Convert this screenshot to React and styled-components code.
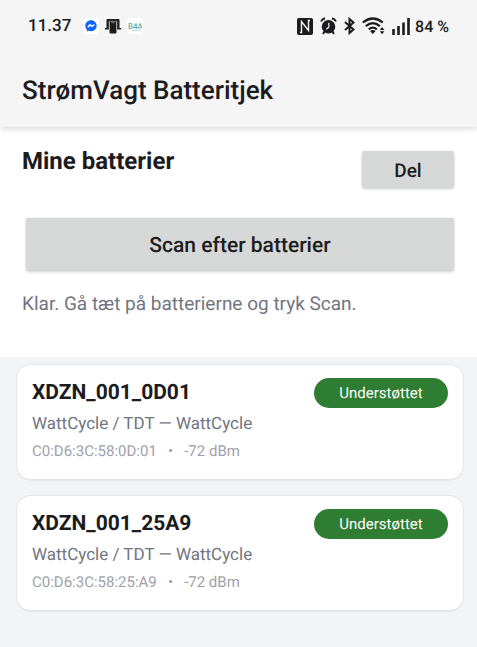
import React from "react";
import styled, { createGlobalStyle } from "styled-components";

const ink = "#1c1c1e";

const GlobalStyle = createGlobalStyle`
  * {
    box-sizing: border-box;
  }

  body {
    margin: 0;
    background: #f3f4f8;
    color: ${ink};
    font-family: Roboto, "Liberation Sans", sans-serif;
    text-rendering: geometricPrecision;
  }

  h1, h2, h3, p, ul {
    margin: 0;
    padding: 0;
  }
`;

const Header = styled.header`
  position: relative;
  background: #f5f5f5;
  box-shadow: 0 1px 6px rgba(0, 0, 0, 0.2);
`;

const StatusBar = styled.div`
  display: flex;
  justify-content: space-between;
  align-items: center;
  height: 52px;
  padding: 0 28px;
`;

const StatusGroup = styled.div`
  display: flex;
  align-items: center;
  gap: ${({ $gap }) => $gap}px;
`;

const Clock = styled.span`
  margin-right: 6px;
  font-size: 17px;
  font-weight: 500;
`;

const Charge = styled.span`
  margin-left: -2px;
  font-size: 16px;
  font-weight: 500;
`;

const AppBadge = styled.span`
  display: flex;
  align-items: center;
  justify-content: center;
  width: 16px;
  height: 16px;
  border-radius: 4px;
  background: white;
`;

const Title = styled.h1`
  padding: 20px 22px 17px;
  font-size: 26px;
  font-weight: 500;
  line-height: 38px;
`;

const Panel = styled.section`
  padding: 20px 22px 41px;
  background: white;
`;

const PanelTop = styled.div`
  display: flex;
  justify-content: space-between;
  align-items: flex-start;
`;

const Heading = styled.h2`
  font-size: 24px;
  font-weight: 700;
  line-height: 28px;
`;

const Button = styled.button`
  display: block;
  width: ${({ $wide }) => ($wide ? "calc(100% - 5px)" : "92px")};
  height: ${({ $wide }) => ($wide ? 53 : 37)}px;
  margin: ${({ $wide }) => ($wide ? "30px 1px 0 4px" : "4px 1px 0 0")};
  padding: 2px 0 0;
  border: none;
  border-radius: 2px;
  background: #d6d8d7;
  box-shadow: 0 1px 3px rgba(0, 0, 0, 0.2);
  color: ${ink};
  font-family: inherit;
  font-size: ${({ $wide }) => ($wide ? 21 : 19)}px;
  font-weight: 500;
  text-rendering: inherit;
`;

const Hint = styled.p`
  margin-top: 21px;
  color: #72757f;
  font-size: 19px;
  line-height: 24px;
`;

const List = styled.ul`
  display: flex;
  flex-direction: column;
  gap: 14px;
  padding: 7px 13px 24px 16px;
  list-style: none;
`;

const Card = styled.li`
  display: flex;
  justify-content: space-between;
  align-items: flex-start;
  padding: 13px 15px 17px;
  border: 1px solid #e4e5e9;
  border-bottom-width: 2px;
  border-radius: 15px;
  background: white;
`;

const Name = styled.h3`
  font-size: 21px;
  font-weight: 700;
  line-height: 30px;
`;

const Model = styled.p`
  color: #72757f;
  font-size: 17px;
  line-height: 32px;
`;

const Meta = styled.p`
  color: #9ea1aa;
  font-size: 15px;
  line-height: 22px;
  white-space: pre;
`;

const Tag = styled.span`
  width: 134px;
  border-radius: 15px;
  background: #2f7d32;
  color: white;
  font-size: 15px;
  line-height: 30px;
  text-align: center;
`;

const Messenger = () => (
  <svg width="12" height="12" viewBox="0 0 12 12">
    <path
      d="M6 .3C2.7.3.3 2.7.3 5.8c0 1.7.6 3.1 1.7 4.1l.1 1.6 1.7-.7c.7.2 1.4.4 2.2.4 3.3 0 5.7-2.4 5.7-5.4S9.3.3 6 .3z"
      fill="#0a66ff"
    />
    <path d="M2.8 7.3 5 4.8l2 1.5 2.3-1.6" fill="none" stroke="white" strokeWidth="1.5" />
  </svg>
);

const PhoneStand = () => (
  <svg width="16" height="16" viewBox="0 0 16 16" fill={ink}>
    <path d="M2.5 1h11q1 0 1 1v8H16v1.5h-4V4H4v7.5H0V10h1.5V2q0-1 1-1z" />
    <rect x="4.5" y="3.5" width="7" height="12" rx="1" />
    <path d="M4.1 12V3.3h7.8V12M6.5 4.7h3" fill="none" stroke="#ddd" strokeWidth=".5" />
  </svg>
);

const B4A = () => (
  <svg width="14" height="12" viewBox="0 0 14 12">
    <text x="0" y="9" fontSize="8" fill="#3c998d">B4A</text>
    <path d="M4 10.5q5 1 9-.7" fill="none" stroke="#9fcfc8" strokeWidth=".8" />
  </svg>
);

const Nfc = () => (
  <svg width="16" height="17" viewBox="0 0 16 17">
    <rect width="16" height="17" rx="2" fill={ink} />
    <path
      d="M3 14.5h1.500V3.500l7 9V2.500H13"
      fill="none"
      stroke="#f5f5f5"
      strokeWidth="1.4"
    />
  </svg>
);

const Alarm = () => (
  <svg width="17" height="18" viewBox="0 0 17 18">
    <circle cx="8.5" cy="9.7" r="6.8" fill={ink} />
    <path
      d="M1 4.5Q2 2 5 1.2M16 4.5Q15 2 12 1.2M4.5 14.5 3 17M12.5 14.5 14 17"
      fill="none"
      stroke={ink}
      strokeWidth="2"
    />
    <path d="M8.8 5.8v4.4l-2.5 2" fill="none" stroke="#f5f5f5" strokeWidth="1.2" />
  </svg>
);

const Bluetooth = () => (
  <svg width="11" height="18" viewBox="0 0 11 18">
    <path
      d="m1 5 8.5 7.5-4 3.5V2l4 3.5L1 13"
      fill="none"
      stroke={ink}
      strokeWidth="2"
    />
  </svg>
);

const Wifi = () => (
  <svg width="23" height="18" viewBox="0 0 23 18">
    <path
      d="M.8 5.5q10-8 20 0M3.8 9.2q7-6 14 0M6.8 12.4q4-3.6 8 0"
      fill="none"
      stroke={ink}
      strokeWidth="2.2"
    />
    <path
      d="M10.8 17 8 14q2.8-2 5.6 0zM17.8 13l2.3-3 2.3 3zM17.8 14.2l2.3 3 2.3-3z"
      fill={ink}
    />
  </svg>
);

const Signal = () => (
  <svg width="18" height="17" viewBox="0 0 18 17">
    <path
      d="M1.5 11v6M6.5 8v9M11.5 4.5V17M16.5 0v17"
      stroke={ink}
      strokeWidth="2.6"
    />
  </svg>
);

const batteries = [
  { name: "XDZN_001_0D01", address: "C0:D6:3C:58:0D:01" },
  { name: "XDZN_001_25A9", address: "C0:D6:3C:58:25:A9" },
];

const Battery = ({ name, address }) => (
  <Card>
    <div>
      <Name>{name}</Name>
      <Model>WattCycle / TDT — WattCycle</Model>
      <Meta>{`${address}   •   -72 dBm`}</Meta>
    </div>
    <Tag>Understøttet</Tag>
  </Card>
);

const App = () => {
  return (
    <>
      <GlobalStyle />
      <Header>
        <StatusBar>
          <StatusGroup $gap={6}>
            <Clock>11.37</Clock>
            <AppBadge>
              <Messenger />
            </AppBadge>
            <PhoneStand />
            <AppBadge>
              <B4A />
            </AppBadge>
          </StatusGroup>
          <StatusGroup $gap={7}>
            <Nfc />
            <Alarm />
            <Bluetooth />
            <Wifi />
            <Signal />
            <Charge>84 %</Charge>
          </StatusGroup>
        </StatusBar>
        <Title>StrømVagt Batteritjek</Title>
      </Header>
      <main>
        <Panel>
          <PanelTop>
            <Heading>Mine batterier</Heading>
            <Button type="button">Del</Button>
          </PanelTop>
          <Button type="button" $wide>
            Scan efter batterier
          </Button>
          <Hint>Klar. Gå tæt på batterierne og tryk Scan.</Hint>
        </Panel>
        <List>
          {batteries.map((battery) => (
            <Battery key={battery.address} {...battery} />
          ))}
        </List>
      </main>
    </>
  );
};

export default App;
